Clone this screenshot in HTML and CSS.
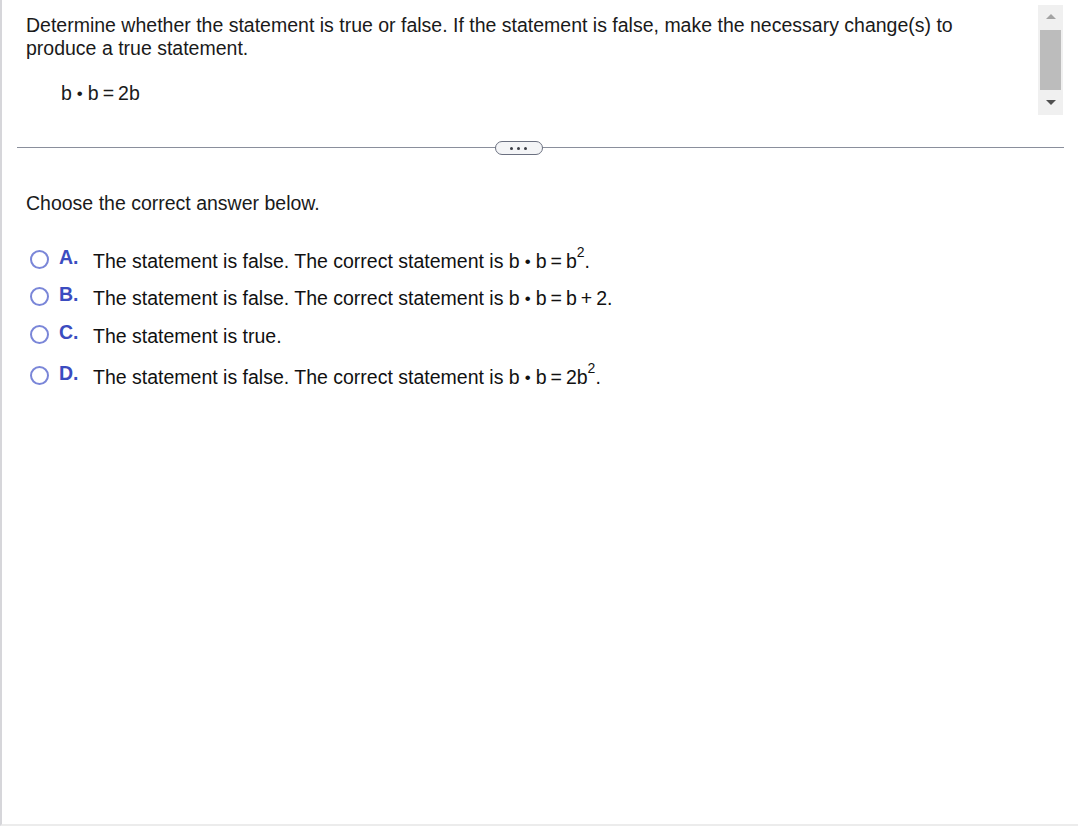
FILE: index.html
```html
<!DOCTYPE html>
<html>
<head>
<meta charset="utf-8">
<link rel="stylesheet" href="styles.css">
</head>
<body>
<div class="frame">
  <div class="question">
    <div class="qtext">
      <p class="prompt">Determine whether the statement is true or false. If the statement is false, make the necessary change(s) to produce a true statement.</p>
      <p class="expr">b<span class="dot">•</span>b<span class="eq">=</span>2b</p>
    </div>
    <div class="scrollbar">
      <div class="arrow up"></div>
      <div class="thumb"></div>
      <div class="arrow down"></div>
    </div>
  </div>
  <div class="divider">
    <span class="pill"><span></span><span></span><span></span></span>
  </div>
  <div class="answers">
    <p class="choose">Choose the correct answer below.</p>
    <ul class="options">
      <li class="opt opt-a"><span class="radio"></span><span class="letter">A.</span><span class="otext">The statement is false. The correct statement is b<span class="dot">•</span>b<span class="eq">=</span>b<sup>2</sup>.</span></li>
      <li class="opt"><span class="radio"></span><span class="letter">B.</span><span class="otext">The statement is false. The correct statement is b<span class="dot">•</span>b<span class="eq">=</span>b<span class="eq">+</span>2.</span></li>
      <li class="opt"><span class="radio"></span><span class="letter">C.</span><span class="otext">The statement is true.</span></li>
      <li class="opt opt-d"><span class="radio"></span><span class="letter">D.</span><span class="otext">The statement is false. The correct statement is b<span class="dot">•</span>b<span class="eq">=</span>2b<sup>2</sup>.</span></li>
    </ul>
  </div>
</div>
</body>
</html>
```
FILE: styles.css
```css
html, body {
  margin: 0;
  padding: 0;
  background: #ffffff;
}
body {
  font-family: "Liberation Sans", Arial, sans-serif;
  font-size: 19.5px;
  color: #1a1a1a;
}
.frame {
  width: 1076px;
  height: 824px;
  border-left: 2px solid #d6d6da;
  border-bottom: 2px solid #ececec;
  box-sizing: content-box;
}
.question {
  display: flex;
  justify-content: space-between;
  padding: 14px 15px 0 24px;
  height: 131px;
  box-sizing: border-box;
}
.qtext {
  width: 950px;
}
.prompt {
  margin: 0;
  line-height: 23px;
}
.expr {
  margin: 22px 0 0 35px;
  line-height: 23px;
}
.dot {
  font-size: 17px;
  margin: 0 5px;
  position: relative;
  top: -1px;
}
.eq {
  margin: 0 4px;
}
sup {
  font-size: 14px;
  line-height: 0;
  position: relative;
  top: -3px;
}
.scrollbar {
  width: 25px;
  height: 110px;
  margin-top: -9px;
  background: #f0f0f0;
  display: flex;
  flex-direction: column;
  align-items: center;
  box-sizing: border-box;
}
.arrow {
  width: 0;
  height: 0;
  border-left: 5px solid transparent;
  border-right: 5px solid transparent;
}
.arrow.up {
  border-bottom: 5px solid #a3a3a3;
  margin-top: 9px;
}
.thumb {
  width: 21px;
  height: 60px;
  background: #bcbcbc;
  margin-top: 11px;
}
.arrow.down {
  border-top: 5px solid #505050;
  margin-top: 10px;
}
.divider {
  height: 32px;
  display: flex;
  align-items: center;
  justify-content: center;
  margin: 0 14px 0 15px;
  position: relative;
  top: 1px;
}
.divider::before {
  content: "";
  position: absolute;
  left: 0;
  right: 0;
  top: 15px;
  height: 1px;
  background: #8a8f9c;
}
.pill {
  position: relative;
  width: 46px;
  height: 12px;
  border: 1px solid #6b7080;
  border-radius: 7px;
  background: #f4f5f7;
  display: flex;
  align-items: center;
  justify-content: center;
  gap: 4px;
  margin-right: 44px;
}
.pill span {
  width: 3px;
  height: 3px;
  border-radius: 50%;
  background: #3c3f47;
}
.answers {
  padding: 29px 0 0 24px;
}
.choose {
  margin: 0;
  line-height: 23px;
}
.options {
  list-style: none;
  margin: 26px 0 0 0;
  padding: 0;
}
.opt {
  display: flex;
  align-items: center;
  height: 38px;
}
.opt-d {
  height: 41px;
  padding-top: 3px;
  box-sizing: border-box;
}
.opt-a {
  padding-top: 2px;
  box-sizing: border-box;
}
.radio {
  width: 15px;
  height: 15px;
  border: 2px solid #7a86d8;
  border-radius: 50%;
  margin-left: 4px;
  margin-right: 10px;
  flex: none;
  position: relative;
  top: -2px;
}
.letter {
  color: #3b4cc0;
  font-weight: bold;
  width: 34px;
  flex: none;
  position: relative;
  top: -4px;
}
.otext {
  color: #111111;
}
```
